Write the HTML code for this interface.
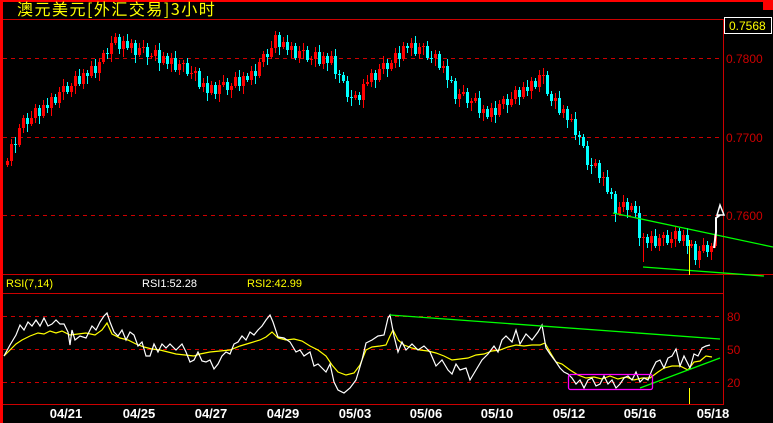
<!DOCTYPE html>
<html><head><meta charset="utf-8"><style>
html,body{margin:0;padding:0;background:#000;width:773px;height:423px;overflow:hidden}
svg{display:block}
</style></head><body>
<svg width="773" height="423" xmlns="http://www.w3.org/2000/svg" font-family="Liberation Sans, Noto Sans CJK SC, sans-serif">
<rect width="773" height="423" fill="#000"/>
<rect x="0" y="0" width="773" height="2" fill="#f00"/>
<rect x="763" y="0" width="10" height="10" fill="#f00"/>
<rect x="0" y="0" width="3" height="423" fill="#f00"/>
<text x="17" y="15" fill="#ff0" font-size="16" letter-spacing="1.5" font-family="Noto Sans CJK SC, sans-serif">澳元美元[外汇交易]3小时</text>
<rect x="3" y="19" width="720" height="1" fill="#c00"/>
<rect x="723" y="19" width="1" height="386" fill="#c00"/>
<g stroke="#c00" stroke-dasharray="4,4" shape-rendering="crispEdges">
<line x1="3" y1="58.5" x2="723" y2="58.5"/><line x1="3" y1="137.5" x2="723" y2="137.5"/><line x1="3" y1="215.5" x2="723" y2="215.5"/>
<line x1="3" y1="316.5" x2="723" y2="316.5"/><line x1="3" y1="349.5" x2="723" y2="349.5"/><line x1="3" y1="382.5" x2="723" y2="382.5"/>
</g>
<rect x="724.5" y="17.5" width="47" height="16" fill="#000" stroke="#fff"/>
<text x="729" y="30" fill="#ff0" font-size="12">0.7568</text>
<g fill="#c00" font-size="12">
<text x="726" y="63">0.7800</text><text x="726" y="142">0.7700</text><text x="726" y="220">0.7600</text>
<text x="727" y="321">80</text><text x="727" y="354">50</text><text x="727" y="387">20</text>
</g>
<rect x="3" y="274" width="770" height="1" fill="#c00"/>
<rect x="3" y="293" width="720" height="1" fill="#c00"/>
<rect x="3" y="404" width="720" height="1" fill="#c00"/>
<text x="6" y="287" fill="#ff0" font-size="11">RSI(7,14)</text>
<text x="142" y="287" fill="#fff" font-size="11">RSI1:52.28</text>
<text x="247" y="287" fill="#ff0" font-size="11">RSI2:42.99</text>
<g fill="#fff" font-size="13" font-weight="bold" text-anchor="middle">
<text x="66" y="418">04/21</text><text x="139" y="418">04/25</text><text x="211" y="418">04/27</text><text x="283" y="418">04/29</text><text x="355" y="418">05/03</text><text x="426" y="418">05/06</text><text x="497" y="418">05/10</text><text x="569" y="418">05/12</text><text x="640" y="418">05/16</text><text x="713" y="418">05/18</text>
</g>
<path fill="#0ff" d="M15 137h1v16h-1zM14 144h3v1h-3zM27 113h1v19h-1zM26 118h3v6h-3zM39 105h1v19h-1zM38 108h3v8h-3zM47 98h1v15h-1zM46 105h3v3h-3zM55 94h1v11h-1zM54 97h3v6h-3zM67 82h1v12h-1zM66 86h3v6h-3zM79 69h1v17h-1zM78 76h3v8h-3zM87 70h1v14h-1zM86 73h3v3h-3zM95 59h1v19h-1zM94 66h3v7h-3zM107 48h1v11h-1zM106 53h3v1h-3zM119 34h1v20h-1zM118 37h3v12h-3zM127 34h1v16h-1zM126 41h3v7h-3zM135 40h1v23h-1zM134 43h3v12h-3zM147 43h1v22h-1zM146 47h3v10h-3zM159 43h1v28h-1zM158 50h3v13h-3zM167 53h1v16h-1zM166 56h3v8h-3zM175 51h1v21h-1zM174 58h3v12h-3zM187 58h1v18h-1zM186 63h3v11h-3zM199 68h1v21h-1zM198 71h3v16h-3zM207 76h1v25h-1zM206 83h3v10h-3zM215 82h1v17h-1zM214 85h3v9h-3zM227 78h1v17h-1zM226 82h3v8h-3zM239 70h1v21h-1zM238 77h3v9h-3zM247 73h1v9h-1zM246 76h3v4h-3zM255 64h1v20h-1zM254 71h3v5h-3zM267 49h1v16h-1zM266 54h3v3h-3zM279 32h1v23h-1zM278 35h3v12h-3zM287 35h1v20h-1zM286 42h3v8h-3zM295 43h1v17h-1zM294 46h3v12h-3zM307 46h1v16h-1zM306 50h3v10h-3zM319 45h1v21h-1zM318 52h3v12h-3zM327 53h1v18h-1zM326 56h3v7h-3zM335 49h1v30h-1zM334 56h3v18h-3zM339 70h1v13h-1zM338 74h3v1h-3zM343 72h1v11h-1zM342 75h3v6h-3zM347 76h1v26h-1zM346 81h3v16h-3zM351 90h1v16h-1zM350 97h3v1h-3zM359 92h1v13h-1zM358 95h3v5h-3zM375 70h1v18h-1zM374 73h3v7h-3zM387 59h1v18h-1zM386 63h3v6h-3zM399 46h1v21h-1zM398 53h3v6h-3zM407 43h1v10h-1zM406 46h3v2h-3zM415 36h1v20h-1zM414 43h3v11h-3zM427 41h1v19h-1zM426 46h3v12h-3zM431 51h1v12h-1zM430 58h3v1h-3zM439 51h1v19h-1zM438 54h3v14h-3zM447 59h1v29h-1zM446 66h3v14h-3zM451 76h1v7h-1zM450 80h3v1h-3zM455 78h1v26h-1zM454 81h3v18h-3zM467 88h1v20h-1zM466 92h3v11h-3zM479 91h1v27h-1zM478 98h3v15h-3zM487 106h1v13h-1zM486 109h3v8h-3zM495 101h1v22h-1zM494 108h3v7h-3zM507 94h1v19h-1zM506 99h3v6h-3zM519 87h1v18h-1zM518 90h3v7h-3zM527 80h1v16h-1zM526 87h3v4h-3zM535 78h1v11h-1zM534 81h3v6h-3zM547 71h1v25h-1zM546 75h3v19h-3zM551 91h1v15h-1zM550 94h3v7h-3zM559 91h1v24h-1zM558 98h3v15h-3zM567 106h1v22h-1zM566 109h3v11h-3zM575 112h1v28h-1zM574 119h3v16h-3zM579 131h1v14h-1zM578 135h3v2h-3zM583 134h1v14h-1zM582 137h3v9h-3zM587 141h1v29h-1zM586 146h3v19h-3zM591 158h1v16h-1zM590 165h3v1h-3zM599 160h1v23h-1zM598 163h3v15h-3zM607 170h1v24h-1zM606 177h3v15h-3zM611 188h1v11h-1zM610 192h3v2h-3zM615 191h1v31h-1zM614 194h3v20h-3zM627 198h1v20h-1zM626 202h3v8h-3zM635 201h1v17h-1zM634 206h3v7h-3zM639 206h1v40h-1zM638 213h3v25h-3zM647 234h1v14h-1zM646 237h3v6h-3zM655 229h1v19h-1zM654 236h3v10h-3zM667 230h1v15h-1zM666 235h3v8h-3zM679 228h1v15h-1zM678 231h3v10h-3zM687 228h1v26h-1zM686 235h3v11h-3zM695 241h1v24h-1zM694 244h3v16h-3zM707 241h1v16h-1zM706 245h3v7h-3z"/>
<path fill="#f00" d="M7 158h1v9h-1zM6 161h3v4h-3zM11 139h1v27h-1zM10 144h3v17h-3zM19 124h1v23h-1zM18 128h3v17h-3zM23 115h1v18h-1zM22 118h3v10h-3zM31 111h1v15h-1zM30 118h3v6h-3zM35 104h1v19h-1zM34 108h3v10h-3zM43 100h1v18h-1zM42 105h3v11h-3zM51 93h1v23h-1zM50 97h3v11h-3zM59 87h1v21h-1zM58 92h3v11h-3zM63 79h1v21h-1zM62 86h3v6h-3zM71 83h1v14h-1zM70 86h3v6h-3zM75 71h1v23h-1zM74 76h3v10h-3zM83 69h1v20h-1zM82 73h3v11h-3zM91 61h1v17h-1zM90 66h3v10h-3zM99 58h1v23h-1zM98 62h3v11h-3zM103 50h1v14h-1zM102 53h3v9h-3zM111 36h1v26h-1zM110 43h3v11h-3zM115 33h1v12h-1zM114 37h3v6h-3zM123 36h1v21h-1zM122 41h3v8h-3zM131 39h1v14h-1zM130 43h3v5h-3zM139 43h1v14h-1zM138 48h3v7h-3zM143 40h1v13h-1zM142 47h3v1h-3zM151 53h1v6h-1zM150 56h3v1h-3zM155 45h1v16h-1zM154 50h3v6h-3zM163 52h1v13h-1zM162 56h3v7h-3zM171 53h1v19h-1zM170 58h3v6h-3zM179 60h1v15h-1zM178 64h3v6h-3zM183 60h1v12h-1zM182 63h3v1h-3zM191 66h1v13h-1zM190 73h3v1h-3zM195 67h1v14h-1zM194 71h3v2h-3zM203 78h1v14h-1zM202 83h3v4h-3zM211 81h1v14h-1zM210 85h3v8h-3zM219 80h1v22h-1zM218 85h3v9h-3zM223 75h1v12h-1zM222 82h3v3h-3zM231 83h1v15h-1zM230 86h3v4h-3zM235 72h1v16h-1zM234 77h3v9h-3zM243 72h1v22h-1zM242 76h3v10h-3zM251 66h1v19h-1zM250 71h3v9h-3zM259 58h1v20h-1zM258 62h3v14h-3zM263 51h1v16h-1zM262 54h3v8h-3zM271 41h1v18h-1zM270 48h3v9h-3zM275 31h1v22h-1zM274 35h3v13h-3zM283 37h1v12h-1zM282 42h3v5h-3zM291 42h1v16h-1zM290 46h3v4h-3zM299 46h1v17h-1zM298 51h3v7h-3zM303 43h1v16h-1zM302 50h3v1h-3zM311 56h1v9h-1zM310 59h3v1h-3zM315 47h1v20h-1zM314 52h3v7h-3zM323 52h1v17h-1zM322 56h3v8h-3zM331 51h1v14h-1zM330 56h3v7h-3zM355 91h1v9h-1zM354 95h3v3h-3zM363 79h1v29h-1zM362 84h3v16h-3zM367 75h1v11h-1zM366 82h3v2h-3zM371 69h1v18h-1zM370 73h3v9h-3zM379 64h1v18h-1zM378 69h3v11h-3zM383 56h1v18h-1zM382 63h3v6h-3zM391 60h1v11h-1zM390 63h3v6h-3zM395 48h1v20h-1zM394 53h3v10h-3zM403 42h1v19h-1zM402 46h3v13h-3zM411 38h1v18h-1zM410 43h3v5h-3zM419 43h1v16h-1zM418 47h3v7h-3zM423 43h1v12h-1zM422 46h3v1h-3zM435 50h1v16h-1zM434 54h3v4h-3zM443 61h1v12h-1zM442 66h3v2h-3zM459 89h1v18h-1zM458 94h3v5h-3zM463 85h1v11h-1zM462 92h3v2h-3zM471 98h1v13h-1zM470 101h3v2h-3zM475 93h1v10h-1zM474 98h3v3h-3zM483 105h1v16h-1zM482 109h3v4h-3zM491 103h1v19h-1zM490 108h3v9h-3zM499 100h1v17h-1zM498 104h3v11h-3zM503 96h1v13h-1zM502 99h3v5h-3zM511 92h1v15h-1zM510 99h3v6h-3zM515 86h1v18h-1zM514 90h3v9h-3zM523 82h1v17h-1zM522 87h3v10h-3zM531 77h1v22h-1zM530 81h3v10h-3zM539 70h1v22h-1zM538 75h3v12h-3zM543 68h1v16h-1zM542 75h3v1h-3zM555 93h1v16h-1zM554 98h3v3h-3zM563 105h1v13h-1zM562 109h3v4h-3zM571 114h1v8h-1zM570 119h3v1h-3zM595 159h1v9h-1zM594 163h3v3h-3zM603 172h1v14h-1zM602 177h3v1h-3zM619 202h1v14h-1zM618 207h3v7h-3zM623 195h1v17h-1zM622 202h3v5h-3zM631 203h1v9h-1zM630 206h3v4h-3zM643 233h1v29h-1zM642 237h3v1h-3zM651 231h1v20h-1zM650 236h3v7h-3zM659 234h1v17h-1zM658 238h3v8h-3zM663 232h1v14h-1zM662 235h3v3h-3zM671 232h1v16h-1zM670 239h3v4h-3zM675 227h1v20h-1zM674 231h3v8h-3zM683 230h1v16h-1zM682 235h3v6h-3zM691 240h1v8h-1zM690 244h3v2h-3zM699 246h1v22h-1zM698 251h3v9h-3zM703 238h1v15h-1zM702 245h3v6h-3zM711 243h1v17h-1zM710 246h3v6h-3zM715 230h1v18h-1zM714 235h3v11h-3z"/>
<g fill="none" stroke-width="1.2">
<polyline stroke="#ff0" points="4,356 10,350 16,344 22,340 30,336 38,333 44,334 50,331 56,333 62,331 70,335 78,334 86,333 95,335 102,330 107,323 112,334 120,338 128,340 136,344 144,347 152,349 160,350 168,352 176,354 185,355 194,356 200,354 210,352 220,351 230,350 240,346 250,343 260,340 266,337 272,332 278,338 286,340 294,339 302,341 310,346 318,350 326,356 332,365 338,372 346,375 354,373 360,365 366,350 372,347 380,346 386,345 390,336 393,330 398,340 404,345 412,348 420,350 428,351 436,353 444,356 452,360 460,359 468,358 476,355 484,354 492,351 500,350 508,347 516,345 524,346 532,345 540,345 545,343 550,352 556,362 562,364 570,370 578,375 586,378 594,377 602,379 610,376 618,379 626,377 634,380 642,378 650,378 658,372 664,368 672,366 680,366 688,370 694,362 700,361 706,356 712,357"/>
<polyline stroke="#fff" points="4,356 10,345 16,335 20,325 24,330 28,322 32,326 36,320 40,326 44,318 48,326 52,324 56,320 60,324 64,324 68,332 70,345 72,330 75,340 80,336 86,338 92,326 96,330 100,322 104,316 107,313 110,322 114,332 118,336 122,330 126,340 130,332 134,335 138,346 142,342 146,356 150,356 154,344 158,352 162,344 166,348 170,344 176,350 182,344 186,352 190,362 194,360 198,352 202,361 206,362 210,360 214,369 218,364 222,356 226,352 230,354 234,344 238,342 242,336 246,340 250,332 254,335 258,330 262,326 266,320 270,315 273,322 278,337 284,338 290,342 296,352 300,350 304,356 310,352 314,366 318,364 322,368 326,372 330,364 334,382 338,390 344,393 350,388 356,380 362,360 366,343 372,340 378,336 384,335 388,318 390,315 394,336 398,352 402,342 406,350 412,344 418,350 424,346 430,352 436,366 442,360 448,370 452,374 456,364 460,370 466,368 470,380 476,370 482,360 488,354 494,346 498,352 502,340 506,336 512,342 516,330 520,344 526,334 532,340 538,332 542,325 546,348 550,354 556,362 560,368 564,372 568,374 572,378 576,384 580,380 584,388 588,380 592,378 596,386 600,384 604,376 608,384 612,380 616,388 620,384 624,378 628,376 632,380 636,372 640,382 644,378 648,380 652,370 656,362 660,360 664,368 668,358 672,356 676,349 680,366 684,356 690,368 694,354 698,356 702,348 706,346 710,345"/>
</g>
<g stroke="#0f0" stroke-width="1.3" fill="none">
<line x1="613" y1="213" x2="773" y2="247"/>
<line x1="643" y1="267" x2="764" y2="276"/>
<line x1="390" y1="315" x2="720" y2="339"/>
<line x1="640" y1="388" x2="720" y2="358"/>
</g>
<rect x="568.5" y="374.5" width="84" height="15" rx="2" fill="none" stroke="#f0f" stroke-width="1.3"/>
<rect x="689" y="240" width="1" height="35" fill="#ff0"/>
<rect x="689" y="388" width="1" height="16" fill="#ff0"/>
<polyline points="714,248 716,232 716,218 720,215" stroke="#fff" stroke-width="2" fill="none"/>
<polygon points="717,215 720,205 724,215" stroke="#fff" stroke-width="1.5" fill="none"/>
</svg>
</body></html>
